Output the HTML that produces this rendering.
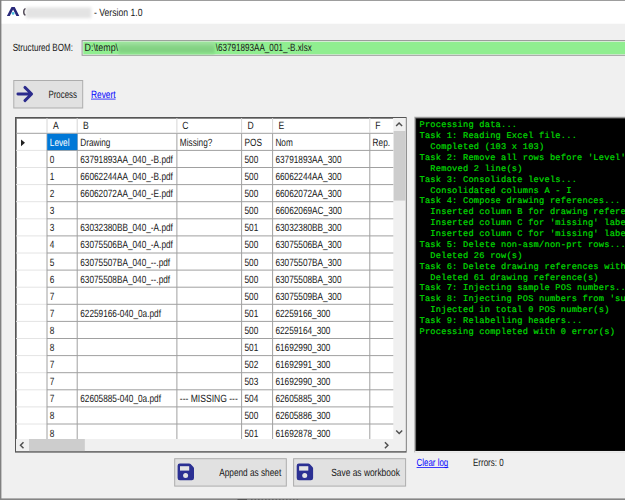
<!DOCTYPE html>
<html><head><meta charset="utf-8"><title>BOM</title>
<style>
html,body{margin:0;padding:0;}
body{width:625px;height:500px;overflow:hidden;position:relative;background:#f0f0f0;}
svg{position:absolute;left:0;top:0;display:block;}
text{font-family:"Liberation Sans",sans-serif;font-size:10.5px;fill:#181818;white-space:pre;text-rendering:geometricPrecision;}
.u{text-decoration:underline;}
#con text{font-family:"Liberation Mono",monospace;font-size:8.7px;letter-spacing:0.220px;fill:#00dc00;stroke:#00dc00;stroke-width:0.2px;}
</style></head><body>
<svg width="625" height="500" viewBox="0 0 625 500">
<defs><filter id="b1" x="-5%" y="-20%" width="110%" height="140%"><feGaussianBlur stdDeviation="0.9"/></filter><filter id="b2" x="-5%" y="-30%" width="110%" height="160%"><feGaussianBlur stdDeviation="1.4"/></filter>
<linearGradient id="gg" x1="0" y1="0" x2="0" y2="1"><stop offset="0" stop-color="#a8e3a8"/><stop offset="0.35" stop-color="#88d688"/><stop offset="0.7" stop-color="#80d080"/><stop offset="1" stop-color="#8ee48e"/></linearGradient>
<clipPath id="cc"><rect x="417" y="119" width="208" height="332"/></clipPath></defs>
<rect x="0.00" y="0.00" width="625.00" height="500.00" fill="#f0f0f0" />
<rect x="0.00" y="0.00" width="625.00" height="23.70" fill="#ffffff" />
<rect x="0.00" y="0.00" width="625.00" height="0.80" fill="#858585" />
<rect x="0.00" y="0.00" width="1.40" height="500.00" fill="#808080" />
<rect x="0.00" y="498.40" width="625.00" height="1.60" fill="#858585" />
<rect x="237.50" y="499.20" width="9.50" height="0.80" fill="#484848" />
<line x1="251.00" y1="499.70" x2="300.00" y2="499.70" stroke="#505050" stroke-width="0.8" stroke-dasharray="1.6 1.9"/>
<path d="M6.9 15.9 L11.5 7.0 L14.7 7.0 L19.3 15.9 L16.4 15.9 L13.1 9.4 L9.8 15.9 Z" fill="#28287a"/>
<circle cx="13.1" cy="13.4" r="1.35" fill="#45bfe0"/>
<path d="M25.6 8.6 C23.2 9.2 23.2 14.6 25.6 15.2" fill="none" stroke="#2a2030" stroke-width="1.3"/>
<rect x="25.8" y="7.4" width="65.6" height="10.8" fill="#e3e3e3" filter="url(#b2)"/>
<rect x="81.60" y="40.00" width="545.40" height="15.80" fill="#9c9c9c" />
<rect x="82.60" y="41.10" width="544.40" height="13.70" fill="#e4f4e4" />
<rect x="83.30" y="41.90" width="543.70" height="12.30" fill="#90ee90" />
<rect x="118.5" y="42.0" width="96" height="12.2" fill="url(#gg)" filter="url(#b1)"/>
<rect x="13.80" y="80.50" width="68.90" height="27.50" fill="#e1e1e1" stroke="#adadad" stroke-width="1"/>
<path d="M17.9 94.0 H31.0 M24.9 87.4 L31.6 94.0 L24.9 100.6" fill="none" stroke="#2b2b8c" stroke-width="2.9" stroke-linecap="round" stroke-linejoin="round"/>
<line x1="91.00" y1="99.10" x2="115.60" y2="99.10" stroke="#0000ff" stroke-width="0.75" />
<rect x="15.00" y="117.00" width="391.60" height="335.60" fill="#555555" />
<rect x="16.00" y="118.00" width="389.60" height="333.10" fill="#ffffff" />
<rect x="16.00" y="118.00" width="377.30" height="0.80" fill="#6e6e6e" />
<rect x="16.00" y="118.00" width="0.80" height="321.00" fill="#6e6e6e" />
<rect x="393.30" y="118.00" width="12.30" height="321.00" fill="#f0f0f0" />
<rect x="16.00" y="439.00" width="389.60" height="12.10" fill="#f0f0f0" />
<rect x="393.70" y="131.00" width="11.90" height="69.60" fill="#cdcdcd" />
<rect x="29.00" y="439.00" width="55.80" height="12.10" fill="#cdcdcd" />
<line x1="16.00" y1="133.30" x2="47.00" y2="133.30" stroke="#a0a0a0" stroke-width="1" />
<line x1="47.00" y1="133.30" x2="393.30" y2="133.30" stroke="#a0a0a0" stroke-width="1" />
<line x1="16.00" y1="150.40" x2="47.00" y2="150.40" stroke="#e4e4e4" stroke-width="1" />
<line x1="47.00" y1="150.40" x2="393.30" y2="150.40" stroke="#a0a0a0" stroke-width="1" />
<line x1="16.00" y1="167.50" x2="47.00" y2="167.50" stroke="#e4e4e4" stroke-width="1" />
<line x1="47.00" y1="167.50" x2="393.30" y2="167.50" stroke="#a0a0a0" stroke-width="1" />
<line x1="16.00" y1="184.60" x2="47.00" y2="184.60" stroke="#e4e4e4" stroke-width="1" />
<line x1="47.00" y1="184.60" x2="393.30" y2="184.60" stroke="#a0a0a0" stroke-width="1" />
<line x1="16.00" y1="201.70" x2="47.00" y2="201.70" stroke="#e4e4e4" stroke-width="1" />
<line x1="47.00" y1="201.70" x2="393.30" y2="201.70" stroke="#a0a0a0" stroke-width="1" />
<line x1="16.00" y1="218.80" x2="47.00" y2="218.80" stroke="#e4e4e4" stroke-width="1" />
<line x1="47.00" y1="218.80" x2="393.30" y2="218.80" stroke="#a0a0a0" stroke-width="1" />
<line x1="16.00" y1="235.90" x2="47.00" y2="235.90" stroke="#e4e4e4" stroke-width="1" />
<line x1="47.00" y1="235.90" x2="393.30" y2="235.90" stroke="#a0a0a0" stroke-width="1" />
<line x1="16.00" y1="253.00" x2="47.00" y2="253.00" stroke="#e4e4e4" stroke-width="1" />
<line x1="47.00" y1="253.00" x2="393.30" y2="253.00" stroke="#a0a0a0" stroke-width="1" />
<line x1="16.00" y1="270.10" x2="47.00" y2="270.10" stroke="#e4e4e4" stroke-width="1" />
<line x1="47.00" y1="270.10" x2="393.30" y2="270.10" stroke="#a0a0a0" stroke-width="1" />
<line x1="16.00" y1="287.20" x2="47.00" y2="287.20" stroke="#e4e4e4" stroke-width="1" />
<line x1="47.00" y1="287.20" x2="393.30" y2="287.20" stroke="#a0a0a0" stroke-width="1" />
<line x1="16.00" y1="304.30" x2="47.00" y2="304.30" stroke="#e4e4e4" stroke-width="1" />
<line x1="47.00" y1="304.30" x2="393.30" y2="304.30" stroke="#a0a0a0" stroke-width="1" />
<line x1="16.00" y1="321.40" x2="47.00" y2="321.40" stroke="#e4e4e4" stroke-width="1" />
<line x1="47.00" y1="321.40" x2="393.30" y2="321.40" stroke="#a0a0a0" stroke-width="1" />
<line x1="16.00" y1="338.50" x2="47.00" y2="338.50" stroke="#e4e4e4" stroke-width="1" />
<line x1="47.00" y1="338.50" x2="393.30" y2="338.50" stroke="#a0a0a0" stroke-width="1" />
<line x1="16.00" y1="355.60" x2="47.00" y2="355.60" stroke="#e4e4e4" stroke-width="1" />
<line x1="47.00" y1="355.60" x2="393.30" y2="355.60" stroke="#a0a0a0" stroke-width="1" />
<line x1="16.00" y1="372.70" x2="47.00" y2="372.70" stroke="#e4e4e4" stroke-width="1" />
<line x1="47.00" y1="372.70" x2="393.30" y2="372.70" stroke="#a0a0a0" stroke-width="1" />
<line x1="16.00" y1="389.80" x2="47.00" y2="389.80" stroke="#e4e4e4" stroke-width="1" />
<line x1="47.00" y1="389.80" x2="393.30" y2="389.80" stroke="#a0a0a0" stroke-width="1" />
<line x1="16.00" y1="406.90" x2="47.00" y2="406.90" stroke="#e4e4e4" stroke-width="1" />
<line x1="47.00" y1="406.90" x2="393.30" y2="406.90" stroke="#a0a0a0" stroke-width="1" />
<line x1="16.00" y1="424.00" x2="47.00" y2="424.00" stroke="#e4e4e4" stroke-width="1" />
<line x1="47.00" y1="424.00" x2="393.30" y2="424.00" stroke="#a0a0a0" stroke-width="1" />
<line x1="47.00" y1="118.00" x2="47.00" y2="133.30" stroke="#d6d6d6" stroke-width="1" />
<line x1="47.00" y1="133.30" x2="47.00" y2="439.00" stroke="#a0a0a0" stroke-width="1" />
<line x1="77.20" y1="118.00" x2="77.20" y2="133.30" stroke="#d6d6d6" stroke-width="1" />
<line x1="77.20" y1="133.30" x2="77.20" y2="439.00" stroke="#a0a0a0" stroke-width="1" />
<line x1="176.90" y1="118.00" x2="176.90" y2="133.30" stroke="#d6d6d6" stroke-width="1" />
<line x1="176.90" y1="133.30" x2="176.90" y2="439.00" stroke="#a0a0a0" stroke-width="1" />
<line x1="241.60" y1="118.00" x2="241.60" y2="133.30" stroke="#d6d6d6" stroke-width="1" />
<line x1="241.60" y1="133.30" x2="241.60" y2="439.00" stroke="#a0a0a0" stroke-width="1" />
<line x1="272.60" y1="118.00" x2="272.60" y2="133.30" stroke="#d6d6d6" stroke-width="1" />
<line x1="272.60" y1="133.30" x2="272.60" y2="439.00" stroke="#a0a0a0" stroke-width="1" />
<line x1="369.80" y1="118.00" x2="369.80" y2="133.30" stroke="#d6d6d6" stroke-width="1" />
<line x1="369.80" y1="133.30" x2="369.80" y2="439.00" stroke="#a0a0a0" stroke-width="1" />
<rect x="47.20" y="133.80" width="30.20" height="16.30" fill="#0078d7" />
<path d="M396.1 126.0 L399.1 123.0 L402.1 126.0" fill="none" stroke="#505050" stroke-width="1.5"/>
<path d="M396.2 430.5 L399.2 433.5 L402.2 430.5" fill="none" stroke="#505050" stroke-width="1.5"/>
<path d="M23.5 442.2 L20.5 445.2 L23.5 448.2" fill="none" stroke="#505050" stroke-width="1.5"/>
<path d="M384.9 442.2 L387.9 445.2 L384.9 448.2" fill="none" stroke="#505050" stroke-width="1.5"/>
<path d="M21.0 139.4 L25.0 142.8 L21.0 146.2 Z" fill="#222"/>
<rect x="174.70" y="458.70" width="111.60" height="27.40" fill="#e1e1e1" stroke="#adadad" stroke-width="1"/>
<rect x="293.60" y="458.70" width="112.00" height="27.40" fill="#e1e1e1" stroke="#adadad" stroke-width="1"/>
<g transform="translate(177.6,463.5)"><path d="M2.2 0 H11.6 Q12.4 0 13 0.6 L15.8 3.4 Q16.4 4 16.4 4.8 V14.6 Q16.4 16.8 14.2 16.8 H2.2 Q0 16.8 0 14.6 V2.2 Q0 0 2.2 0 Z" fill="#2b3093"/><rect x="2.4" y="2.7" width="9.2" height="4.4" fill="#e4e4e4"/><circle cx="8.0" cy="11.9" r="2.5" fill="#e4e4e4"/></g>
<g transform="translate(296.7,463.5)"><path d="M2.2 0 H11.6 Q12.4 0 13 0.6 L15.8 3.4 Q16.4 4 16.4 4.8 V14.6 Q16.4 16.8 14.2 16.8 H2.2 Q0 16.8 0 14.6 V2.2 Q0 0 2.2 0 Z" fill="#2b3093"/><rect x="2.4" y="2.7" width="9.2" height="4.4" fill="#e4e4e4"/><circle cx="8.0" cy="11.9" r="2.5" fill="#e4e4e4"/></g>
<rect x="414.20" y="116.70" width="212.80" height="335.70" fill="#b4b4b4" />
<rect x="415.10" y="117.60" width="211.90" height="333.70" fill="#6a6a6a" />
<rect x="416.10" y="118.50" width="210.90" height="332.40" fill="#000000" />
<rect x="415.10" y="451.20" width="211.90" height="1.20" fill="#ffffff" />
<line x1="416.60" y1="467.50" x2="448.40" y2="467.50" stroke="#0000ff" stroke-width="0.75" />
<g>
<text transform="translate(94.00 16.00) scale(0.8226 1)" font-size="10.6">- Version 1.0</text>
<text transform="translate(12.70 51.20) scale(0.7724 1)">Structured BOM:</text>
<text transform="translate(84.50 51.40) scale(0.8467 1)">D:\temp\</text>
<text transform="translate(215.70 51.40) scale(0.7724 1)">\63791893AA_001_-B.xlsx</text>
<text transform="translate(48.40 97.90) scale(0.7524 1)">Process</text>
<text transform="translate(91.00 97.90) scale(0.7924 1)" style="fill:#0000ff">Revert</text>
<text transform="translate(53.00 128.70) scale(0.8190 1)">A</text>
<text transform="translate(83.00 128.70) scale(0.8190 1)">B</text>
<text transform="translate(182.20 128.70) scale(0.8190 1)">C</text>
<text transform="translate(247.60 128.70) scale(0.8190 1)">D</text>
<text transform="translate(278.40 128.70) scale(0.8190 1)">E</text>
<text transform="translate(375.20 128.70) scale(0.8190 1)">F</text>
<text transform="translate(49.80 145.80) scale(0.7857 1)" style="fill:#fff">Level</text>
<text transform="translate(80.20 145.80) scale(0.7857 1)">Drawing</text>
<text transform="translate(179.80 145.80) scale(0.7857 1)">Missing?</text>
<text transform="translate(244.50 145.80) scale(0.7857 1)">POS</text>
<text transform="translate(275.40 145.80) scale(0.7857 1)">Nom</text>
<text transform="translate(372.60 145.80) scale(0.7857 1)">Rep.</text>
<text transform="translate(49.80 162.90) scale(0.7857 1)">0</text>
<text transform="translate(80.20 162.90) scale(0.7857 1)">63791893AA_040_-B.pdf</text>
<text transform="translate(244.50 162.90) scale(0.7857 1)">500</text>
<text transform="translate(275.40 162.90) scale(0.7857 1)">63791893AA_300</text>
<text transform="translate(49.80 180.00) scale(0.7857 1)">1</text>
<text transform="translate(80.20 180.00) scale(0.7857 1)">66062244AA_040_-B.pdf</text>
<text transform="translate(244.50 180.00) scale(0.7857 1)">500</text>
<text transform="translate(275.40 180.00) scale(0.7857 1)">66062244AA_300</text>
<text transform="translate(49.80 197.10) scale(0.7857 1)">2</text>
<text transform="translate(80.20 197.10) scale(0.7857 1)">66062072AA_040_-E.pdf</text>
<text transform="translate(244.50 197.10) scale(0.7857 1)">500</text>
<text transform="translate(275.40 197.10) scale(0.7857 1)">66062072AA_300</text>
<text transform="translate(49.80 214.20) scale(0.7857 1)">3</text>
<text transform="translate(244.50 214.20) scale(0.7857 1)">500</text>
<text transform="translate(275.40 214.20) scale(0.7857 1)">66062069AC_300</text>
<text transform="translate(49.80 231.30) scale(0.7857 1)">3</text>
<text transform="translate(80.20 231.30) scale(0.7857 1)">63032380BB_040_-A.pdf</text>
<text transform="translate(244.50 231.30) scale(0.7857 1)">501</text>
<text transform="translate(275.40 231.30) scale(0.7857 1)">63032380BB_300</text>
<text transform="translate(49.80 248.40) scale(0.7857 1)">4</text>
<text transform="translate(80.20 248.40) scale(0.7857 1)">63075506BA_040_-A.pdf</text>
<text transform="translate(244.50 248.40) scale(0.7857 1)">500</text>
<text transform="translate(275.40 248.40) scale(0.7857 1)">63075506BA_300</text>
<text transform="translate(49.80 265.50) scale(0.7857 1)">5</text>
<text transform="translate(80.20 265.50) scale(0.7857 1)">63075507BA_040_--.pdf</text>
<text transform="translate(244.50 265.50) scale(0.7857 1)">500</text>
<text transform="translate(275.40 265.50) scale(0.7857 1)">63075507BA_300</text>
<text transform="translate(49.80 282.60) scale(0.7857 1)">6</text>
<text transform="translate(80.20 282.60) scale(0.7857 1)">63075508BA_040_--.pdf</text>
<text transform="translate(244.50 282.60) scale(0.7857 1)">500</text>
<text transform="translate(275.40 282.60) scale(0.7857 1)">63075508BA_300</text>
<text transform="translate(49.80 299.70) scale(0.7857 1)">7</text>
<text transform="translate(244.50 299.70) scale(0.7857 1)">500</text>
<text transform="translate(275.40 299.70) scale(0.7857 1)">63075509BA_300</text>
<text transform="translate(49.80 316.80) scale(0.7857 1)">7</text>
<text transform="translate(80.20 316.80) scale(0.7857 1)">62259166-040_0a.pdf</text>
<text transform="translate(244.50 316.80) scale(0.7857 1)">501</text>
<text transform="translate(275.40 316.80) scale(0.7857 1)">62259166_300</text>
<text transform="translate(49.80 333.90) scale(0.7857 1)">8</text>
<text transform="translate(244.50 333.90) scale(0.7857 1)">500</text>
<text transform="translate(275.40 333.90) scale(0.7857 1)">62259164_300</text>
<text transform="translate(49.80 351.00) scale(0.7857 1)">8</text>
<text transform="translate(244.50 351.00) scale(0.7857 1)">501</text>
<text transform="translate(275.40 351.00) scale(0.7857 1)">61692990_300</text>
<text transform="translate(49.80 368.10) scale(0.7857 1)">7</text>
<text transform="translate(244.50 368.10) scale(0.7857 1)">502</text>
<text transform="translate(275.40 368.10) scale(0.7857 1)">61692991_300</text>
<text transform="translate(49.80 385.20) scale(0.7857 1)">7</text>
<text transform="translate(244.50 385.20) scale(0.7857 1)">503</text>
<text transform="translate(275.40 385.20) scale(0.7857 1)">61692990_300</text>
<text transform="translate(49.80 402.30) scale(0.7857 1)">7</text>
<text transform="translate(80.20 402.30) scale(0.7857 1)">62605885-040_0a.pdf</text>
<text transform="translate(179.80 402.30) scale(0.8152 1)">--- MISSING ---</text>
<text transform="translate(244.50 402.30) scale(0.7857 1)">504</text>
<text transform="translate(275.40 402.30) scale(0.7857 1)">62605885_300</text>
<text transform="translate(49.80 419.40) scale(0.7857 1)">8</text>
<text transform="translate(244.50 419.40) scale(0.7857 1)">500</text>
<text transform="translate(275.40 419.40) scale(0.7857 1)">62605886_300</text>
<text transform="translate(49.80 436.50) scale(0.7857 1)">8</text>
<text transform="translate(244.50 436.50) scale(0.7857 1)">501</text>
<text transform="translate(275.40 436.50) scale(0.7857 1)">61692878_300</text>
<text transform="translate(219.20 476.00) scale(0.7867 1)">Append as sheet</text>
<text transform="translate(331.20 476.00) scale(0.8000 1)">Save as workbook</text>
<text transform="translate(416.60 466.30) scale(0.7524 1)" style="fill:#0000ff">Clear log</text>
<text transform="translate(473.00 466.30) scale(0.7619 1)">Errors: 0</text>
</g>
<g id="con" clip-path="url(#cc)">
<text x="419.5" y="127.40">Processing data...</text>
<text x="419.5" y="138.27">Task 1: Reading Excel file...</text>
<text x="419.5" y="149.14">  Completed (103 x 103)</text>
<text x="419.5" y="160.01">Task 2: Remove all rows before &#x27;Level&#x27; row...</text>
<text x="419.5" y="170.88">  Removed 2 line(s)</text>
<text x="419.5" y="181.75">Task 3: Consolidate levels...</text>
<text x="419.5" y="192.62">  Consolidated columns A - I</text>
<text x="419.5" y="203.49">Task 4: Compose drawing references...</text>
<text x="419.5" y="214.36">  Inserted column B for drawing references</text>
<text x="419.5" y="225.23">  Inserted column C for &#x27;missing&#x27; labels</text>
<text x="419.5" y="236.10">  Inserted column C for &#x27;missing&#x27; labels</text>
<text x="419.5" y="246.97">Task 5: Delete non-asm/non-prt rows...</text>
<text x="419.5" y="257.84">  Deleted 26 row(s)</text>
<text x="419.5" y="268.71">Task 6: Delete drawing references without files...</text>
<text x="419.5" y="279.58">  Deleted 61 drawing reference(s)</text>
<text x="419.5" y="290.45">Task 7: Injecting sample POS numbers...</text>
<text x="419.5" y="301.32">Task 8: Injecting POS numbers from &#x27;supplier&#x27;...</text>
<text x="419.5" y="312.19">  Injected in total 0 POS number(s)</text>
<text x="419.5" y="323.06">Task 9: Relabelling headers...</text>
<text x="419.5" y="333.93">Processing completed with 0 error(s)</text>
</g>
</svg>
</body></html>
